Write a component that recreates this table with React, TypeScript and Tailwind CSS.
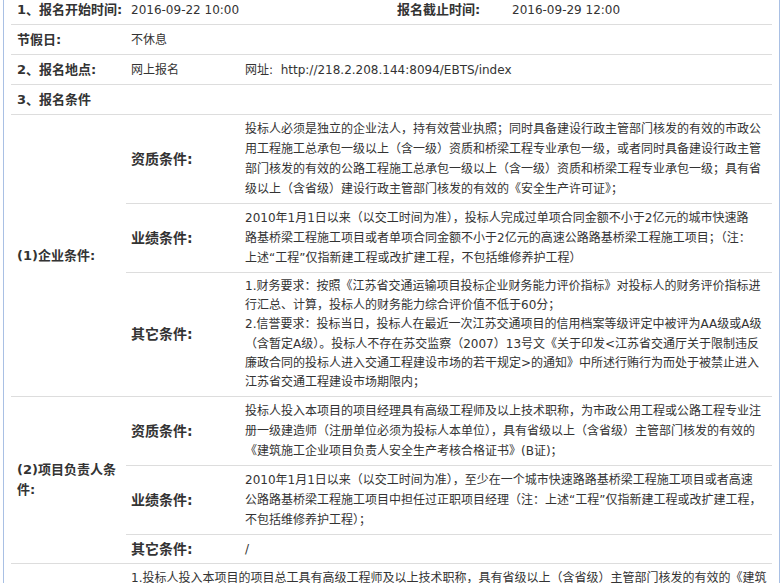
import React from "react";

type Sub = { label: string; lines: React.ReactNode[]; tight?: boolean };

function Block({ label, rows }: { label: string; rows: Sub[] }) {
  return (
    <div className="grid grid-cols-[115px_1fr] border-b border-[#dddddd]">
      <div className="flex items-center pl-[6px] pr-[4px] text-[13px] font-bold leading-[20px] text-[#333]">
        {label}
      </div>
      <div className="flex flex-col">
        {rows.map((r, i) => (
          <div
            key={i}
            className={
              i < rows.length - 1
                ? "grid grid-cols-[114px_1fr] border-b border-[#dddddd]"
                : "grid grid-cols-[114px_1fr]"
            }
          >
            <div className="flex items-center pl-[5px] text-[14px] font-bold text-[#333]">{r.label}</div>
            <div
              className={
                r.tight
                  ? "py-[4px] pl-[5px] pr-[5px] leading-[19.2px]"
                  : "py-[4px] pl-[5px] pr-[5px] leading-[20px]"
              }
            >
              {r.lines.map((l, j) => (
                <div key={j} className="whitespace-nowrap">
                  {l}
                </div>
              ))}
            </div>
          </div>
        ))}
      </div>
    </div>
  );
}

export default function App() {
  return (
    <div className="h-[583px] overflow-hidden bg-white font-['DejaVu_Sans','Noto_Sans_CJK_SC',sans-serif] text-[12px] text-[#333]">
      <div className="-mt-[5px] ml-[3px] w-[777px] border-x border-[#a9c0e4] px-[7px] pb-[200px]">
        <div className="grid h-[30px] grid-cols-[115px_266px_115px_265px] items-center border-b border-[#dddddd]">
          <div className="pl-[6px] text-[13px] font-bold">1、报名开始时间:</div>
          <div className="pl-[5px]">2016-09-22 10:00</div>
          <div className="pl-[5px] text-[13px] font-bold">报名截止时间:</div>
          <div className="pl-[5px]">2016-09-29 12:00</div>
        </div>
        <div className="grid h-[30px] grid-cols-[115px_1fr] items-center border-b border-[#dddddd]">
          <div className="pl-[6px] text-[13px] font-bold">节假日:</div>
          <div className="pl-[5px]">不休息</div>
        </div>
        <div className="grid h-[30px] grid-cols-[115px_114px_1fr] items-center border-b border-[#dddddd]">
          <div className="pl-[6px] text-[13px] font-bold">2、报名地点:</div>
          <div className="pl-[5px]">网上报名</div>
          <div className="pl-[5px]">网址:&nbsp; http://218.2.208.144:8094/EBTS/index</div>
        </div>
        <div className="flex h-[30px] items-center border-b border-[#dddddd]">
          <div className="pl-[6px] text-[13px] font-bold">3、报名条件</div>
        </div>

        <Block
          label="(1)企业条件:"
          rows={[
            {
              label: "资质条件:",
              lines: [
                "投标人必须是独立的企业法人，持有效营业执照；同时具备建设行政主管部门核发的有效的市政公",
                "用工程施工总承包一级以上（含一级）资质和桥梁工程专业承包一级，或者同时具备建设行政主管",
                "部门核发的有效的公路工程施工总承包一级以上（含一级）资质和桥梁工程专业承包一级；具有省",
                "级以上（含省级）建设行政主管部门核发的有效的《安全生产许可证》；",
              ],
            },
            {
              label: "业绩条件:",
              lines: [
                "2010年1月1日以来（以交工时间为准），投标人完成过单项合同金额不小于2亿元的城市快速路",
                "路基桥梁工程施工项目或者单项合同金额不小于2亿元的高速公路路基桥梁工程施工项目；（注：",
                "上述“工程”仅指新建工程或改扩建工程，不包括维修养护工程）",
              ],
            },
            {
              label: "其它条件:",
              tight: true,
              lines: [
                "1.财务要求：按照《江苏省交通运输项目投标企业财务能力评价指标》对投标人的财务评价指标进",
                "行汇总、计算，投标人的财务能力综合评价值不低于60分；",
                "2.信誉要求：投标当日，投标人在最近一次江苏交通项目的信用档案等级评定中被评为AA级或A级",
                "（含暂定A级）。投标人不存在苏交监察（2007）13号文《关于印发<江苏省交通厅关于限制违反",
                "廉政合同的投标人进入交通工程建设市场的若干规定>的通知》中所述行贿行为而处于被禁止进入",
                "江苏省交通工程建设市场期限内；",
              ],
            },
          ]}
        />

        <Block
          label="(2)项目负责人条件:"
          rows={[
            {
              label: "资质条件:",
              lines: [
                "投标人投入本项目的项目经理具有高级工程师及以上技术职称，为市政公用工程或公路工程专业注",
                "册一级建造师（注册单位必须为投标人本单位），具有省级以上（含省级）主管部门核发的有效的",
                "《建筑施工企业项目负责人安全生产考核合格证书》(B证)；",
              ],
            },
            {
              label: "业绩条件:",
              lines: [
                "2010年1月1日以来（以交工时间为准），至少在一个城市快速路路基桥梁工程施工项目或者高速",
                "公路路基桥梁工程施工项目中担任过正职项目经理（注：上述“工程”仅指新建工程或改扩建工程，",
                "不包括维修养护工程）；",
              ],
            },
            { label: "其它条件:", lines: ["/"] },
          ]}
        />

        <div className="grid grid-cols-[115px_1fr] border-b border-[#dddddd]">
          <div className="flex items-center pl-[6px] pr-[4px] text-[13px] font-bold leading-[20px]">
            (3)其它条件:
          </div>
          <div className="py-[4px] pl-[5px] pr-[5px] leading-[20px]">
            <div className="whitespace-nowrap">
              1.投标人投入本项目的项目总工具有高级工程师及以上技术职称，具有省级以上（含省级）主管部门核发的有效的《建筑
            </div>
            <div className="whitespace-nowrap">施工企业项目负责人安全生产考核合格证书》(C证)；</div>
            <div className="whitespace-nowrap">2.投标人须在开标时携带项目经理及项目总工的相关证件原件备查；</div>
            <div className="whitespace-nowrap">3.本项目不接受联合体投标。</div>
          </div>
        </div>
      </div>
    </div>
  );
}
